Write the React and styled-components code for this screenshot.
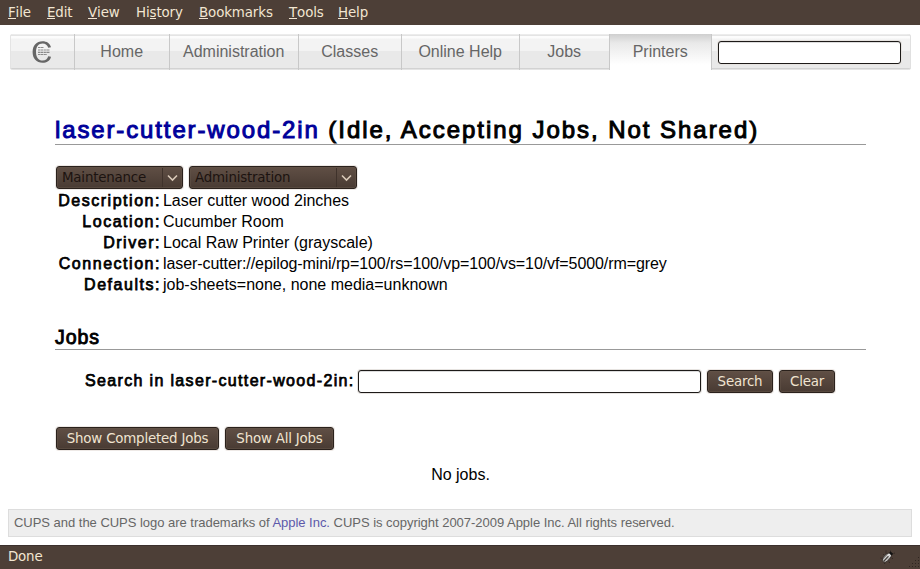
import React from "react";
import styled, { createGlobalStyle } from "styled-components";

const GlobalStyle = createGlobalStyle`
  * { box-sizing: border-box; }
  body { margin: 0; background: #fff; }
`;

const ui = `"DejaVu Sans", sans-serif`;
const sans = `"Liberation Sans", Helvetica, sans-serif`;

const Window = styled.div`
  width: 920px;
  height: 569px;
  display: flex;
  flex-direction: column;
  background: #fff;
  color: #000;
  font: 16px/21px ${sans};
  overflow: hidden;
  white-space: nowrap;
`;

const MenuBar = styled.nav`
  height: 25px;
  flex: none;
  display: flex;
  padding-left: 8px;
  background: #4d3f37;
  color: #f2e6d2;
  font: 13.4px/26px ${ui};
  letter-spacing: -0.12px;
`;

const MenuEntry = styled.span`
  width: ${(p) => p.$width}px;
`;
const Mnemonic = styled.span`
  display: inline-block;
  height: 19px;
  line-height: 26px;
  vertical-align: top;
  border-bottom: 1px solid #f2e6d2;
`;

const Tabs = styled.div`
  height: 36px;
  flex: none;
  margin: 9px 9px 0 10px;
  display: flex;
  border-radius: 3px;
  background: linear-gradient(#ececec 0 1px, #e4e4e4 1px 2px, #fcfcfc 2px 4px, #f3f3f3 5px 17px, #e9e9e9 17px 34px, #d2d2d2 34px 35px, #e4e4e4 35px);
  box-shadow: inset 1px 0 #e4e4e4, inset -1px 0 #e0e0e0;
`;

const Tab = styled.a`
  width: ${(p) => p.$width}px;
  display: flex;
  align-items: center;
  justify-content: center;
  padding: 0 0.6px 1px 0;
  border-right: 1px solid #c8c8c8;
  color: #666;
  ${(p) => p.$active && `background: linear-gradient(#cfcfcf, #e9e9e9 25%, #fff 85%);`}
`;

const Field = styled.input`
  width: ${(p) => p.$width}px;
  height: 23px;
  flex: none;
  margin: 0;
  padding: 0 5px;
  border: 1px solid #1d1a18;
  border-radius: 3px;
  outline: none;
  background: #fff;
  box-shadow: 0 0 0 1px #e6e3e0, inset 0 1px #ddd;
`;
const NavField = styled(Field)`
  margin: 7px 0 0 6px;
`;

const Content = styled.main`
  margin: 0 54px 0 55px;
  height: 439px;
  flex: none;
`;

const Heading = styled.h1`
  margin: 45px 0 0;
  height: 30px;
  border-bottom: 1px solid #999;
  font: 400 24px/29px ${sans};
  letter-spacing: 1.96px;
  -webkit-text-stroke: 1px currentColor;
`;
const Link = styled.a`
  color: #00009a;
  letter-spacing: 1.87px;
`;
const SubHeading = styled.h2`
  margin: 30px 0 0;
  height: 25px;
  border-bottom: 1px solid #999;
  font: 400 19.5px/25px ${sans};
  letter-spacing: 0.9px;
  -webkit-text-stroke: 0.9px currentColor;
`;

const Row = styled.div`
  display: flex;
  gap: 6px;
  margin: ${(p) => p.$margin};
`;

const Button = styled.button`
  width: ${(p) => p.$width}px;
  height: 23px;
  padding: 0;
  border: 1px solid #2a211c;
  border-radius: 3px;
  background: linear-gradient(#604f45, #493b33);
  box-shadow: inset 0 0 0 1px #64544a88, 0 0 0 1px #eee9e6;
  color: #f0e4d1;
  font: 13.4px/20px ${ui};
  letter-spacing: -0.2px;
  white-space: nowrap;
`;

const Select = styled(Button)`
  display: flex;
  padding-left: 5px;
  color: #1c1310;
  line-height: 21px;
  text-align: left;
`;
const SelectText = styled.span`
  flex: 1;
`;
const Arrow = styled.span`
  width: 20px;
  height: 19px;
  margin-top: 1px;
  padding-right: 1px;
  display: flex;
  align-items: center;
  justify-content: center;
  border-left: 1px solid #3f322b;
`;

const Details = styled.dl`
  margin: 1px 0 0;
  display: grid;
  grid-template-columns: 106px auto;
  column-gap: 2px;
  grid-auto-rows: 21px;
`;
const Term = styled.dt`
  justify-self: end;
  letter-spacing: 1.53px;
  -webkit-text-stroke: 0.75px currentColor;
`;
const Value = styled.dd`
  margin: 0;
  letter-spacing: ${(p) => p.$spacing || 0}px;
`;

const SearchRow = styled.div`
  display: flex;
  margin: 20px 0 0 30px;
`;
const SearchLabel = styled.label`
  width: 273px;
  letter-spacing: 1.34px;
  -webkit-text-stroke: 0.75px currentColor;
`;
const SearchButtons = styled.div`
  display: flex;
  gap: 6px;
  margin-left: 6px;
`;

const Empty = styled.p`
  margin: 14px 0 0;
  text-align: center;
`;

const Footer = styled.footer`
  height: 28px;
  flex: none;
  margin: 0 8px;
  padding-left: 5px;
  border: 1px solid #ddd;
  background: #eee;
  color: #666;
  font-size: 13px;
  line-height: 26px;
  letter-spacing: -0.025px;
`;
const FooterLink = styled.a`
  color: #5d59aa;
`;

const StatusBar = styled.div`
  height: 24px;
  flex: none;
  margin-top: 8px;
  padding: 0 0 0 8px;
  display: flex;
  border-top: 1px solid #3b302d;
  background: #4d3f37;
  color: #f2e6d2;
  font: 13.4px/21px ${ui};
  letter-spacing: -0.2px;
`;
const StatusText = styled.span`
  flex: 1;
`;

const menus = [
  ["", "F", "ile", 39],
  ["", "E", "dit", 41],
  ["", "V", "iew", 48],
  ["Hi", "s", "tory", 63],
  ["", "B", "ookmarks", 90],
  ["", "T", "ools", 49],
  ["", "H", "elp", 40],
];

const tabs = [
  ["Home", 95],
  ["Administration", 129],
  ["Classes", 103],
  ["Online Help", 118],
  ["Jobs", 90],
  ["Printers", 102],
];

const details = [
  ["Description:", "Laser cutter wood 2inches", -0.03],
  ["Location:", "Cucumber Room"],
  ["Driver:", "Local Raw Printer (grayscale)"],
  ["Connection:", "laser-cutter://epilog-mini/rp=100/rs=100/vp=100/vs=10/vf=5000/rm=grey", -0.085],
  ["Defaults:", "job-sheets=none, none media=unknown"],
];

const CupsLogo = () => (
  <svg width="20" height="24" viewBox="0 0 20 24" fill="none">
    <path d="M19 7.3C18.2 3.3 14.6 1.2 10.6 1.2C4.4 1.2.6 5.4.6 12S4.4 22.8 10.6 22.8C14.6 22.8 18.2 20.7 19 16.7L16.2 16.2C15.6 19 13.4 20.6 10.7 20.6C6.4 20.6 4 17.4 4 12S6.4 3.4 10.7 3.4C13.4 3.4 15.6 5 16.2 7.8Z" fill="#666" />
    <path d="M6 7.5h6M6 10h12M6 12.4h12M6 14.5h9" stroke="#8a8a8a" strokeWidth="1.1" strokeDasharray="2 .4 3 .5" />
  </svg>
);

const Chevron = () => (
  <svg width="11" height="8" viewBox="0 0 11 8" fill="none">
    <path d="M1 1.5L5.5 6L10 1.5" stroke="#d9c9b8" strokeWidth="1.6" />
  </svg>
);

const Bug = () => (
  <svg width="15" height="16" viewBox="0 0 15 16">
    <path d="M3 5l2 2M6 1.5v3M0.5 9l3 1M4.5 15l1-3M9.5 14l-1-3M13 9.5l-3-1M10.5 3l0-2M12 5l3-1" stroke="#2a221e" strokeOpacity=".8" strokeDasharray="1.2 .6" />
    <ellipse cx="6.8" cy="8.6" rx="5.6" ry="3" transform="rotate(-47 6.8 8.6)" fill="#8d8a87" stroke="#332c28" strokeWidth=".7" />
    <path d="M7 6.6l2-2.2 2 2-2 2z" fill="#f4f4f4" />
    <path d="M3.4 10.8l5-5.4M5.4 12.5l5-5.5" stroke="#ddd" strokeWidth=".9" />
    <path d="M4 12l5-5.4" stroke="#35302d" strokeWidth=".9" />
    <path d="M9.2 4l1.4-1.4 2.4 2.2-1.4 1.6z" fill="#111" />
  </svg>
);

const Grip = () => (
  <svg width="12" height="12" viewBox="0 0 12 12" fill="#2f2521" shapeRendering="crispEdges">
    {[0, 1, 2, 3].map((r) =>
      Array.from({ length: r + 1 }, (_, c) => (
        <rect key={`${r}-${c}`} x={10 - c * 3} y={r * 3} width="1" height="1" />
      ))
    )}
  </svg>
);
const StatusIcon = styled.span`
  width: 28px;
  padding-top: 3px;
  line-height: 0;
`;
const GripSlot = styled.span`
  padding-top: 11px;
  line-height: 0;
`;

export default function App() {
  return (
    <Window>
      <GlobalStyle />
      <MenuBar>
        {menus.map(([a, key, b, w]) => (
          <MenuEntry key={key + b} $width={w}>
            {a}
            <Mnemonic>{key}</Mnemonic>
            {b}
          </MenuEntry>
        ))}
      </MenuBar>
      <Tabs>
        <Tab $width={65}>
          <CupsLogo />
        </Tab>
        {tabs.map(([label, w]) => (
          <Tab key={label} $width={w} $active={label === "Printers"}>
            {label}
          </Tab>
        ))}
        <NavField $width={183} />
      </Tabs>
      <Content>
        <Heading>
          <Link>laser-cutter-wood-2in</Link> (Idle, Accepting Jobs, Not Shared)
        </Heading>
        <Row $margin="21px 0 0 1px">
          <Select $width={127}>
            <SelectText>Maintenance</SelectText>
            <Arrow><Chevron /></Arrow>
          </Select>
          <Select $width={168}>
            <SelectText>Administration</SelectText>
            <Arrow><Chevron /></Arrow>
          </Select>
        </Row>
        <Details>
          {details.map(([term, value, spacing]) => (
            <React.Fragment key={term}>
              <Term>{term}</Term>
              <Value $spacing={spacing}>{value}</Value>
            </React.Fragment>
          ))}
        </Details>
        <SubHeading>Jobs</SubHeading>
        <SearchRow>
          <SearchLabel>Search in laser-cutter-wood-2in:</SearchLabel>
          <Field $width={343} />
          <SearchButtons>
            <Button $width={66}>Search</Button>
            <Button $width={56}>Clear</Button>
          </SearchButtons>
        </SearchRow>
        <Row $margin="34px 0 0 1px">
          <Button $width={163}>Show Completed Jobs</Button>
          <Button $width={109}>Show All Jobs</Button>
        </Row>
        <Empty>No jobs.</Empty>
      </Content>
      <Footer>
        CUPS and the CUPS logo are trademarks of <FooterLink>Apple Inc.</FooterLink> CUPS is copyright 2007-2009 Apple Inc. All rights reserved.
      </Footer>
      <StatusBar>
        <StatusText>Done</StatusText>
        <StatusIcon><Bug /></StatusIcon>
        <GripSlot><Grip /></GripSlot>
      </StatusBar>
    </Window>
  );
}
